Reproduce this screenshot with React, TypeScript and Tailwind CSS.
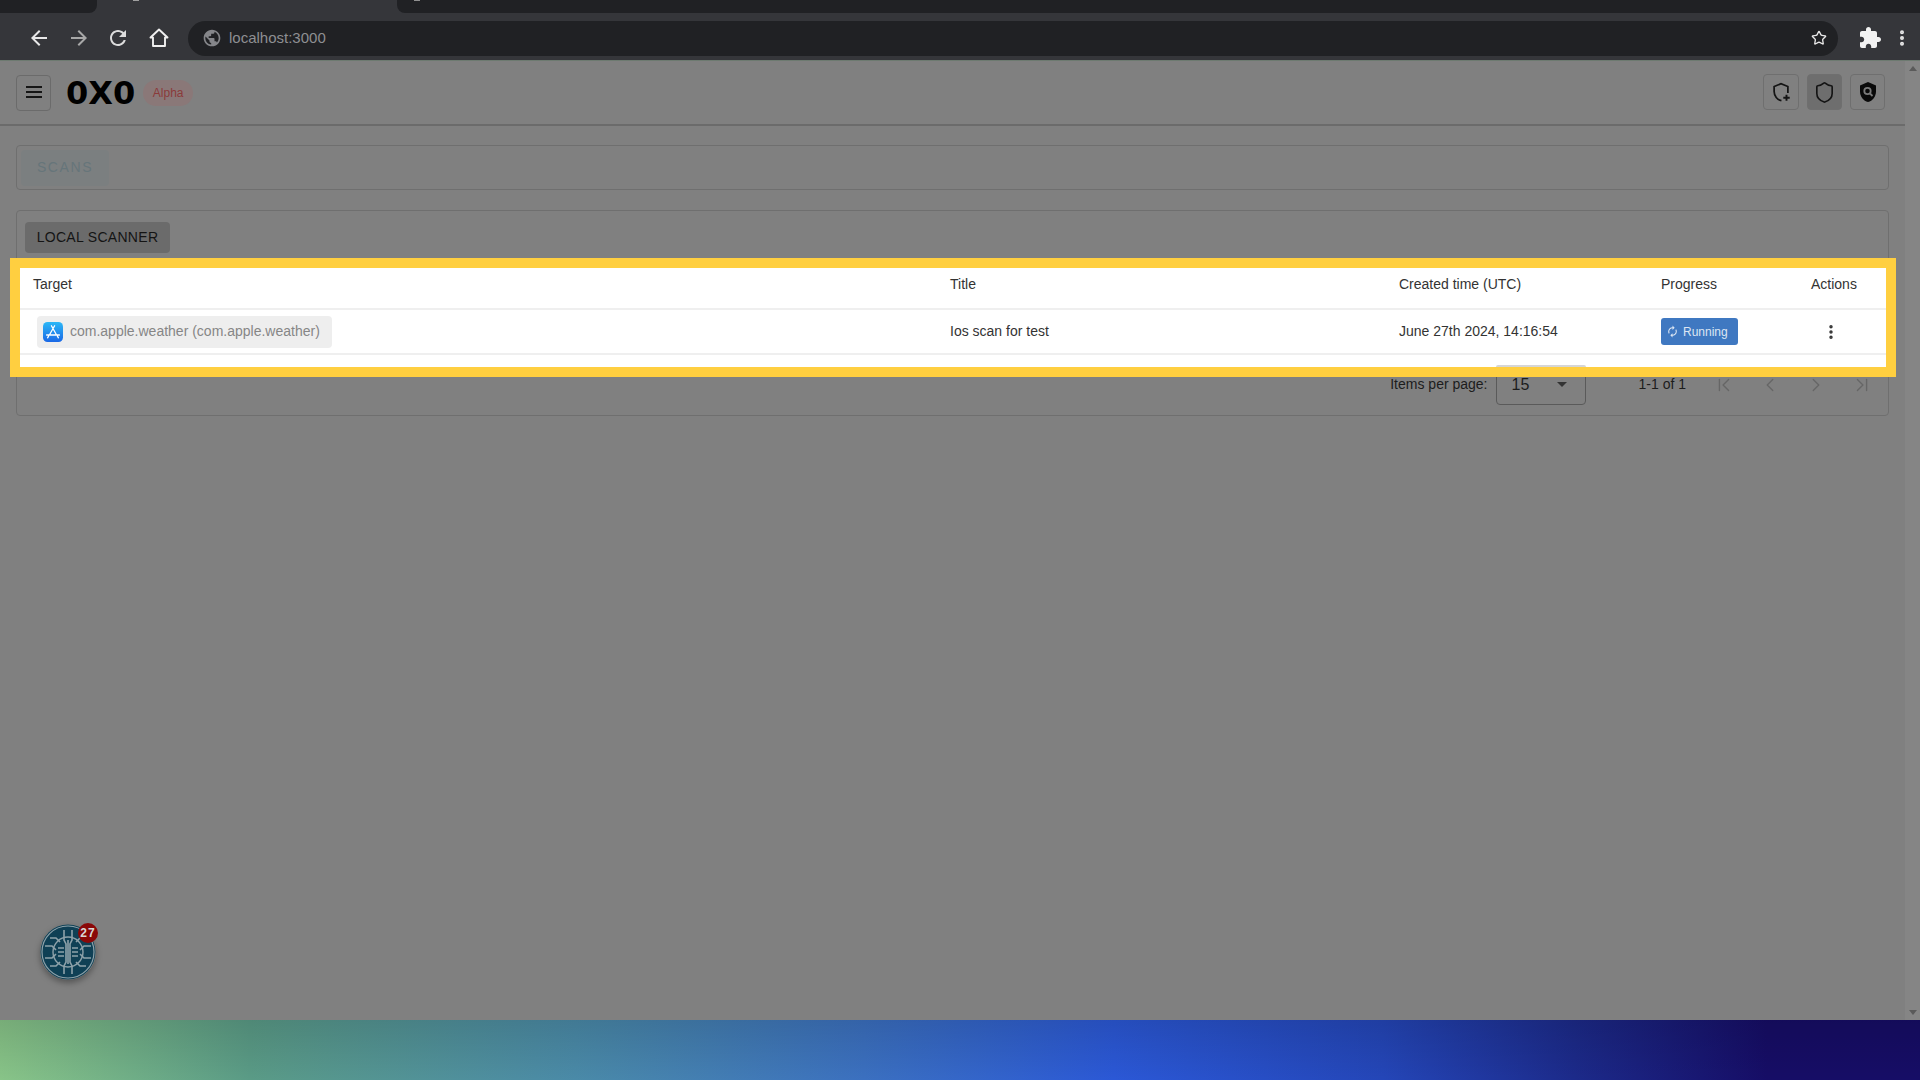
import React from "react";
import { EllipsisVertical, Star, ChevronLeft, ChevronRight, ChevronFirst, ChevronLast, Shield } from "lucide-react";

function IconBox({ active, wide, children }: { active?: boolean; wide?: boolean; children: React.ReactNode }) {
  return (
    <div className={"flex h-[36px] items-center justify-center rounded-[4px] border border-[#6f6f6f] " + (wide ? "w-[36px] " : "w-[35px] ") + (active ? "bg-[#6e6e6e]" : "")}>
      {children}
    </div>
  );
}

function Filled({ d, size, color }: { d: string; size: number; color: string }) {
  return (
    <svg width={size} height={size} viewBox="0 0 24 24" fill={color} className="shrink-0">
      <path d={d} />
    </svg>
  );
}

function AppStore() {
  return (
    <svg width="20" height="20" viewBox="0 0 20 20" className="shrink-0">
      <defs>
        <linearGradient id="as" x1="0" y1="0" x2="0" y2="1">
          <stop offset="0" stopColor="#2cb8f6" />
          <stop offset="1" stopColor="#1a68e6" />
        </linearGradient>
      </defs>
      <rect width="20" height="20" rx="4.5" fill="url(#as)" />
      <path d="M11.6 3.8 6.4 13M8.4 3.8 13.6 13M3.600 13h12.800M5.600 14.200l-1 1.600M14.400 14.200l1 1.600" stroke="#fff" strokeWidth="1.3" strokeLinecap="round" fill="none" />
    </svg>
  );
}

function Logo() {
  return (
    <div className="relative h-[56px] w-[56px] rounded-full shadow-[0_3px_6px_rgba(0,0,0,0.35)]">
      <svg width="56" height="56" viewBox="0 0 56 56">
        <circle cx="28" cy="28" r="27.500" fill="#0f4055" />
        <circle cx="28" cy="28" r="26" fill="none" stroke="#8ea2aa" strokeWidth="1.200" />
        <circle cx="28" cy="28" r="15" fill="none" stroke="#8ea2aa" strokeWidth="1.400" />
        <g stroke="#8ea2aa" strokeWidth="1.600" fill="none">
          <path d="M24 6v10l2 4v18l-2 4v8M32 6v10l-2 4v18l2 4v8" />
          <path d="M28 16v24M18 24h6M18 28h6M18 32h6M32 24h6M32 28h6M32 32h6" />
          <path d="M5 22h7l4 4M5 34h7l4-4M51 22h-7l-4 4M51 34h-7l-4-4M10 14h6l4 4M46 14h-6l-4 4M10 42h6l4-4M46 42h-6l-4-4" />
        </g>
      </svg>
      <div className="absolute right-[-2px] top-[-1px] flex h-[20px] w-[20px] items-center justify-center rounded-full bg-[#8a0808] text-[12px] font-bold tracking-[1px] text-[#d8d8d8]">
        27
      </div>
    </div>
  );
}

const arrowBack = "M20 11H7.830l5.590-5.590L12 4l-8 8 8 8 1.410-1.410L7.830 13H20v-2z";
const refresh = "M17.650 6.350C16.200 4.900 14.210 4 12 4c-4.420 0-7.990 3.580-7.990 8s3.570 8 7.990 8c3.730 0 6.840-2.550 7.730-6h-2.080c-.82 2.330-3.040 4-5.650 4-3.310 0-6-2.690-6-6s2.690-6 6-6c1.660 0 3.140.69 4.220 1.780L13 11h7V4l-2.350 2.350z";
const globe = "M12 2C6.480 2 2 6.480 2 12s4.480 10 10 10 10-4.480 10-10S17.520 2 12 2zm-1 17.930c-3.950-.49-7-3.850-7-7.930 0-.62.08-1.210.21-1.790L9 15v1c0 1.100.9 2 2 2v1.930zm6.900-2.540c-.26-.81-1-1.390-1.900-1.390h-1v-3c0-.55-.45-1-1-1H8v-2h2c.55 0 1-.45 1-1V7h2c1.100 0 2-.9 2-2v-.41c2.930 1.190 5 4.060 5 7.410 0 2.080-.8 3.970-2.100 5.390z";
const puzzle = "M20.500 11H19V7c0-1.100-.9-2-2-2h-4V3.500C13 2.120 11.880 1 10.500 1S8 2.120 8 3.500V5H4c-1.100 0-1.990.9-1.990 2v3.800H3.500c1.490 0 2.700 1.210 2.700 2.700s-1.210 2.700-2.700 2.700H2V20c0 1.100.9 2 2 2h3.800v-1.500c0-1.490 1.210-2.700 2.700-2.700 1.490 0 2.700 1.210 2.700 2.700V22H17c1.100 0 2-.9 2-2v-4h1.500c1.380 0 2.500-1.120 2.500-2.500S21.880 11 20.500 11z";
const autorenew = "M12 6v3l4-4-4-4v3c-4.420 0-8 3.580-8 8 0 1.570.46 3.030 1.240 4.260L6.700 14.800c-.45-.83-.7-1.790-.7-2.800 0-3.310 2.690-6 6-6zm6.760 1.740L17.300 9.200c.44.84.7 1.790.7 2.800 0 3.310-2.690 6-6 6v-3l-4 4 4 4v-3c4.420 0 8-3.580 8-8 0-1.570-.46-3.030-1.240-4.260z";

export default function App() {
  return (
    <div className="relative flex h-[1080px] w-[1920px] flex-col overflow-hidden bg-[#808080] font-['Liberation_Sans',Arial,sans-serif]">
      {/* Browser tab strip */}
      <div className="relative flex h-[13px] items-start bg-[#35363a]">
        <div className="h-[13px] w-[97px] rounded-br-[8px] bg-[#202124]" />
        <div className="h-[1px] w-[6px] translate-x-[36px] bg-[#a0a0a0]" />
        <div className="ml-auto h-[13px] w-[1523px] rounded-bl-[8px] bg-[#202124]">
          <div className="ml-[17px] h-[1px] w-[6px] bg-[#909090]" />
        </div>
      </div>
      {/* Browser toolbar */}
      <div className="flex h-[47px] items-center bg-[#35363a] pl-[27px] pr-[6px] pt-[3px]">
        <Filled d={arrowBack} size={24} color="#e8e8e8" />
        <div className="ml-[16px] rotate-180">
          <Filled d={arrowBack} size={24} color="#a8a8a8" />
        </div>
        <div className="ml-[15px]">
          <Filled d={refresh} size={24} color="#dcdcdc" />
        </div>
        <svg width="22" height="22" viewBox="0 0 22 22" className="ml-[18px] shrink-0" fill="none" stroke="#f0f0f0" strokeWidth="1.900">
          <path d="M11 2.500 2.500 10.500H5v8.500h12v-8.500h2.500z" strokeLinejoin="round" />
        </svg>
        <div className="ml-[18px] flex h-[35px] w-[1650px] items-center rounded-full bg-[#202124] pl-[14px]">
          <Filled d={globe} size={20} color="#85868a" />
          <span className="ml-[7px] text-[15px] text-[#8e8f92]">localhost:3000</span>
          <Star size={16} strokeWidth={2} className="ml-auto mr-[11px] text-[#e8e8e8]" />
        </div>
        <div className="ml-[20px]">
          <Filled d={puzzle} size={24} color="#f2f2f2" />
        </div>
        <EllipsisVertical size={20} strokeWidth={2.800} className="ml-[10px] text-[#e8e8e8]" />
      </div>

      {/* Page */}
      <div className="relative flex flex-1 border-t border-[#6d7a70]">
        <div className="flex min-w-0 flex-1 flex-col">
          <header className="flex h-[65px] items-center border-b-2 border-[#6b6b6b] pl-[16px] pr-[20px]">
            <div className="flex h-[36px] w-[35px] items-center justify-center rounded-[4px] border border-[#6b6b6b]">
              <svg width="16" height="13" viewBox="0 0 16 13" fill="#161616">
                <rect y="0" width="16" height="2" />
                <rect y="5" width="16" height="2" />
                <rect y="10" width="16" height="2" />
              </svg>
            </div>
            <span className="ml-[15px] font-['DejaVu_Sans',sans-serif] text-[32px] font-bold leading-none text-black">0X0</span>
            <span className="ml-[8px] flex h-[26px] w-[50px] items-center justify-center rounded-full bg-[#8a7878] text-[12px] text-[#8a3a3a]">
              Alpha
            </span>
            <div className="ml-auto flex gap-[8px] pb-[1px]">
              <IconBox wide>
                <svg width="22" height="22" viewBox="0 0 24 24" fill="none" stroke="#141414" strokeWidth="1.900">
                  <path d="M12.500 21.500C8 20.500 4.500 16.300 4.500 11.500v-5.500L12 3l7.500 3v7" />
                  <path d="M18 15v6.500M14.500 18.300h7" strokeWidth="2.100" />
                </svg>
              </IconBox>
              <IconBox active>
                <Shield size={23} strokeWidth={1.700} className="text-[#141414]" />
              </IconBox>
              <IconBox>
                <svg width="24" height="24" viewBox="0 0 24 24">
                  <path d="M12 2 4 5.500v6C4 16.500 7.400 21 12 22c4.600-1 8-5.500 8-10.500v-6z" fill="#0a0a0a" />
                  <circle cx="11.500" cy="11" r="3.200" fill="none" stroke="#7a7a7a" strokeWidth="1.800" />
                  <path d="m14 13.500 2.500 2.500" stroke="#7a7a7a" strokeWidth="1.800" />
                </svg>
              </IconBox>
            </div>
          </header>

          <div className="flex flex-col gap-[20px] px-[16px] pt-[19px]">
            <div className="flex h-[45px] items-center rounded-[4px] border border-[#6f6f6f] px-[4px]">
              <div className="flex h-[36px] w-[88px] items-center justify-center rounded-[4px] bg-[#7b7f80] text-[14px] tracking-[1.600px] text-[#66757a]">
                SCANS
              </div>
            </div>
            <div className="flex h-[206px] flex-col rounded-[4px] border border-[#6f6f6f] px-[8px]">
              <div className="mt-[11px] flex h-[31px] w-[145px] items-center justify-center rounded-[4px] bg-[#6b6b6b] text-[14px] tracking-[0.300px] text-[#141414]">
                LOCAL SCANNER
              </div>
              <div className="mb-[10px] mt-auto flex h-[41px] items-center text-[14px] text-[#1c1c1c]">
                <span className="ml-auto">Items per page:</span>
                <div className="ml-[8px] flex h-[41px] w-[90px] items-center justify-between rounded-[4px] border border-[#5a5a5a] pl-[15px] pr-[18px] text-[16px]">
                  <span>15</span>
                  <span className="h-0 w-0 border-x-[5px] border-t-[5px] border-x-transparent border-t-[#333]" />
                </div>
                <span className="ml-[53px]">1-1 of 1</span>
                <ChevronFirst size={22} strokeWidth={1.500} className="ml-[27px] text-[#666]" />
                <ChevronLeft size={22} strokeWidth={1.500} className="ml-[24px] text-[#666]" />
                <ChevronRight size={22} strokeWidth={1.500} className="ml-[24px] text-[#666]" />
                <ChevronLast size={22} strokeWidth={1.500} className="ml-[24px] mr-[7px] text-[#666]" />
              </div>
            </div>
          </div>

          <div className="mb-[40px] ml-[40px] mt-auto">
            <Logo />
          </div>
        </div>
        {/* Page scrollbar */}
        <div className="flex w-[15px] flex-col items-center justify-between bg-[#858585] py-[5px]">
          <span className="h-0 w-0 border-x-[4px] border-b-[5px] border-x-transparent border-b-[#5a5a5a]" />
          <span className="h-0 w-0 border-x-[4px] border-t-[5px] border-x-transparent border-t-[#5a5a5a]" />
        </div>

        {/* Highlighted table */}
        <div className="absolute left-[10px] top-[197px] h-[119px] w-[1886px] border-[10px] border-[#ffcf40] bg-white text-[14px] text-[#333]">
          <div className="grid h-[42px] grid-cols-[917px_449px_262px_150px_1fr] items-center border-b-2 border-[#efefef] pb-[7px] pl-[13px]">
            <span>Target</span>
            <span>Title</span>
            <span>Created time (UTC)</span>
            <span>Progress</span>
            <span>Actions</span>
          </div>
          <div className="grid h-[45px] grid-cols-[917px_449px_262px_150px_1fr] items-center border-b-2 border-[#efefef] pl-[13px]">
            <div>
              <div className="ml-[4px] flex h-[32px] w-[295px] items-center rounded-[4px] bg-[#eeeeee] pl-[6px] text-[#868686]">
                <AppStore />
                <span className="ml-[7px]">com.apple.weather (com.apple.weather)</span>
              </div>
            </div>
            <span>Ios scan for test</span>
            <span>June 27th 2024, 14:16:54</span>
            <div>
              <div className="flex h-[27px] w-[77px] items-center gap-[4px] rounded-[3px] bg-[#3f78c1] pl-[5px] text-[12px] text-[#dce6f3]">
                <Filled d={autorenew} size={13} color="#dce6f3" />
                <span>Running</span>
              </div>
            </div>
            <div className="pl-[11px]">
              <EllipsisVertical size={18} strokeWidth={2.600} className="text-[#333]" />
            </div>
          </div>
          <div className="absolute bottom-0 left-[1476px] h-[2px] w-[90px] rounded-t-[4px] bg-[#d6d6d6]" />
        </div>
      </div>

      {/* Desktop wallpaper */}
      <div className="h-[60px] bg-[linear-gradient(180deg,rgba(0,0,0,0.12),rgba(0,0,0,0)),linear-gradient(90deg,#88c488_0%,#5a9b86_13%,#4a8aa8_30%,#3b70c0_45%,#2b58d6_58%,#2446b8_72%,#1c2a8a_82%,#160d66_92%,#160d66_100%)]" />
    </div>
  );
}
